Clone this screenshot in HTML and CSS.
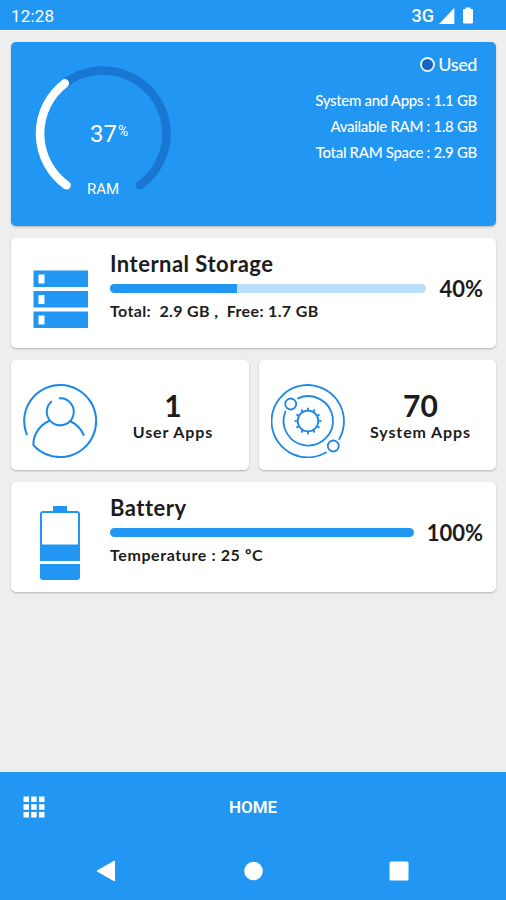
FILE: index.html
```html
<!DOCTYPE html>
<html lang="en">
<head>
  <meta charset="utf-8">
  <title>Device Info</title>
  <link rel="stylesheet" href="styles.css">
</head>
<body>
  <header class="status-bar">
    <span class="clock">12:28</span>
    <div class="status-icons">
      <span class="network">3G</span>
      <svg width="17" height="16" viewBox="0 0 17 16"><path d="M1 16L16.3 0V16z" fill="#fff"/></svg>
      <svg class="status-battery" width="10" height="17" viewBox="0 0 10 17"><path d="M2.5 .5h5V2H9q1 0 1 1v12.5q0 1-1 1H1q-1 0-1-1V3q0-1 1-1h1.5z" fill="#fff"/></svg>
    </div>
  </header>

  <main class="content">
    <section class="card ram-card">
      <div class="gauge">
        <svg width="138" height="138" viewBox="0 0 138 138" fill="none" stroke-width="8.6" stroke-linecap="round">
          <path d="M30.8 18.3A63.5 63.5 0 0 1 132.5 69A63.5 63.5 0 0 1 106 120.2" stroke="#1976d2"/>
          <path d="M32.5 120.2A63.5 63.5 0 0 1 30.8 18.3" stroke="#fff"/>
        </svg>
        <div class="gauge-value">37<sup>%</sup></div>
        <div class="gauge-label">RAM</div>
      </div>
      <div class="ram-info">
        <div class="used"><span class="used-dot"></span>Used</div>
        <div class="ram-row">System and Apps : 1.1 GB</div>
        <div class="ram-row">Available RAM : 1.8 GB</div>
        <div class="ram-row">Total RAM Space : 2.9 GB</div>
      </div>
    </section>

    <section class="card info-card">
      <svg class="info-icon storage-icon" width="56" height="58" viewBox="0 0 56 58">
        <path d="M.5.5H55V17H.5zM.5 21H55V37.5H.5zM.5 41.5H55V58H.5z" fill="#2196f3"/>
        <path d="M5.5 4.5h6v9h-6zM5.5 25h6v9h-6zM5.5 45.5h6v9h-6z" fill="#fff"/>
      </svg>
      <div class="info-body">
        <h2>Internal Storage</h2>
        <div class="meter">
          <div class="bar"><div class="bar-fill" style="width: 40%"></div></div>
          <span class="percent">40%</span>
        </div>
        <p class="storage-detail">Total:&nbsp; 2.9 GB ,&nbsp; Free: 1.7 GB</p>
      </div>
    </section>

    <div class="apps">
      <section class="card app-card">
        <svg width="74" height="74" viewBox="0 0 74 74" fill="none" stroke="#1e88e5" stroke-width="2" stroke-linecap="round" stroke-linejoin="round">
          <path d="M3.7 50.3A36 36 0 1 1 10.3 61C10.3 50 17 41 26 37"/>
          <path d="M28.3 17.7A13.5 13.5 0 1 0 36.7 14.3"/>
          <path d="M47 37C53 40 58 44.5 60.7 51"/>
        </svg>
        <div class="app-count">
          <strong>1</strong>
          <span>User Apps</span>
        </div>
      </section>
      <section class="card app-card">
        <svg width="74" height="74" viewBox="0 0 74 74" fill="none" stroke="#1e88e5" stroke-width="1.8" stroke-linecap="round">
          <path d="M55 68.5A36.2 36.2 0 1 1 68.3 55"/>
          <path d="M27 14.4A24.7 24.7 0 1 1 14.4 27.5"/>
          <circle cx="19.7" cy="20" r="5.5"/>
          <circle cx="62.3" cy="62" r="5.5"/>
          <circle cx="37" cy="37" r="10.3"/>
          <circle cx="37" cy="37" r="12" stroke-width="2.6" stroke-linecap="butt" pathLength="120" stroke-dasharray="3 7" stroke-dashoffset="1.5"/>
        </svg>
        <div class="app-count">
          <strong>70</strong>
          <span>System Apps</span>
        </div>
      </section>
    </div>

    <section class="card info-card">
      <svg class="info-icon battery-icon" width="40" height="74" viewBox="0 0 40 74" fill="#2196f3">
        <path d="M13 0h14v6H13z"/>
        <path d="M1 55V8q0-2 2-2h34q2 0 2 2v47" fill="none" stroke="#2196f3" stroke-width="2"/>
        <path d="M0 38.5h40V55H0zM0 58h40v13q0 3-3 3H3q-3 0-3-3z"/>
      </svg>
      <div class="info-body">
        <h2>Battery</h2>
        <div class="meter">
          <div class="bar"><div class="bar-fill" style="width: 100%"></div></div>
          <span class="percent">100%</span>
        </div>
        <p class="battery-detail">Temperature : 25 ºC</p>
      </div>
    </section>
  </main>

  <footer class="bottom">
    <div class="tab-bar">
      <svg width="22" height="22" viewBox="0 0 22 22" fill="#fff">
        <path d="M.5.5H6V6H.5zM8.2.5h5.5V6H8.2zM16 .5h5.5V6H16zM.5 8.2H6v5.5H.5zM8.2 8.2h5.5v5.5H8.2zM16 8.2h5.5v5.5H16zM.5 16H6v5.5H.5zM8.2 16h5.5v5.5H8.2zM16 16h5.5v5.5H16z"/>
      </svg>
      <span class="tab-title">HOME</span>
    </div>
    <div class="system-nav">
      <svg width="20" height="22" viewBox="0 0 20 22"><path d="M1 11L18.5 1V21z" fill="#fff" stroke="#fff" stroke-linejoin="round"/></svg>
      <svg width="20" height="20" viewBox="0 0 20 20"><circle cx="10.5" cy="10" r="9.3" fill="#fff"/></svg>
      <svg width="20" height="20" viewBox="0 0 20 20"><rect x=".5" y=".5" width="19" height="19" rx="1.5" fill="#fff"/></svg>
    </div>
  </footer>
</body>
</html>
```
FILE: styles.css
```css
* {
  box-sizing: border-box;
}

body {
  display: flex;
  flex-direction: column;
  height: 900px;
  margin: 0;
  background: #eeeeee;
  font-family: Lato, sans-serif;
  color: #1c1c1c;
  white-space: nowrap;
}

svg {
  display: block;
  flex: none;
}

.status-bar {
  display: flex;
  justify-content: space-between;
  align-items: center;
  height: 30px;
  padding: 1px 33px 0 11px;
  background: #2196f3;
  color: #fff;
  font: 500 17px Roboto, sans-serif;
  box-shadow: 0 1px 0 #fafafa;
}

.clock {
  font-weight: 400;
  letter-spacing: 0.2px;
}

.network {
  font-size: 18px;
}

.status-icons {
  display: flex;
  align-items: center;
  gap: 4px;
}

.status-battery {
  margin-left: 4px;
}

.content {
  display: flex;
  flex: 1;
  flex-direction: column;
  gap: 12px;
  padding: 12px 10px 0 11px;
}

.card {
  height: 110px;
  background: #fff;
  border-radius: 5px;
  box-shadow: 0 1px 2px rgba(0, 0, 0, 0.25);
}

/* RAM card */
.ram-card {
  display: flex;
  justify-content: space-between;
  height: 184px;
  padding: 10px 19px 0 23px;
  background: #2196f3;
  color: #fff;
}

.gauge {
  position: relative;
  width: 138px;
  height: 138px;
  margin-top: 13px;
  text-align: center;
  font-family: Roboto, sans-serif;
}

.gauge-value {
  position: absolute;
  top: 53px;
  left: 56px;
  font-size: 24px;
  line-height: 32px;
}

.gauge-value sup {
  margin-left: 1px;
  font-size: 14px;
  line-height: 1;
  vertical-align: 6px;
}

.gauge-label {
  position: absolute;
  right: 0;
  bottom: 4px;
  left: 0;
  font-size: 15px;
  line-height: 20px;
}

.ram-info {
  display: flex;
  flex-direction: column;
  align-items: flex-end;
}

.used {
  display: flex;
  align-items: center;
  gap: 3px;
  height: 24px;
  margin-bottom: 11px;
  font-size: 18px;
  font-weight: 500;
  letter-spacing: -0.4px;
}

.used-dot {
  width: 15px;
  height: 15px;
  border: 2px solid #e3f2fd;
  border-radius: 50%;
  background: #1565c0;
}

.ram-row {
  font-size: 15px;
  font-weight: 500;
  line-height: 26px;
  letter-spacing: -0.32px;
}

/* Storage and battery cards */
.info-card {
  display: flex;
  padding: 12px 13px 0 22px;
}

.info-icon {
  margin-right: 21px;
}

.storage-icon {
  margin-top: 20px;
}

.battery-icon {
  margin: 12px 30px 0 7px;
}

.info-body {
  flex: 1;
}

h2 {
  margin: 0;
  font-size: 22px;
  line-height: 27px;
  letter-spacing: 0.48px;
}

.meter {
  display: flex;
  align-items: center;
  gap: 13px;
  height: 21px;
  margin-top: 1px;
}

.bar {
  flex: 1;
  height: 9px;
  border-radius: 5px;
  background: #bbdefb;
  overflow: hidden;
}

.bar-fill {
  height: 100%;
  background: #2196f3;
}

.percent {
  font-size: 22px;
  font-weight: 700;
}

.info-body p {
  margin: 2px 0 0;
  font-size: 16px;
  font-weight: 700;
  line-height: 20px;
}

.storage-detail {
  letter-spacing: 0.35px;
}

.battery-detail {
  letter-spacing: 0.6px;
}

/* App counters */
.apps {
  display: grid;
  grid-template-columns: 238px 237px;
  gap: 10px;
}

.app-card {
  display: flex;
  align-items: center;
  padding: 12px 12px 0;
}

.app-count {
  display: flex;
  flex: 1;
  flex-direction: column;
  align-items: center;
  margin: -13px 0 0 12px;
}

.app-count strong {
  font-size: 30px;
  line-height: 34px;
}

.app-count span {
  font-size: 16px;
  font-weight: 700;
  line-height: 20px;
  letter-spacing: 0.9px;
}

/* Bottom bars */
.bottom {
  height: 128px;
  background: #2196f3;
  color: #fff;
}

.tab-bar {
  display: grid;
  grid-template-columns: 1fr auto 1fr;
  align-items: center;
  height: 70px;
  padding: 0 23px;
}

.tab-title {
  font: 600 17px Roboto, sans-serif;
}

.system-nav {
  display: flex;
  justify-content: space-between;
  align-items: center;
  height: 58px;
  padding: 0 97px 0 96px;
}
```
